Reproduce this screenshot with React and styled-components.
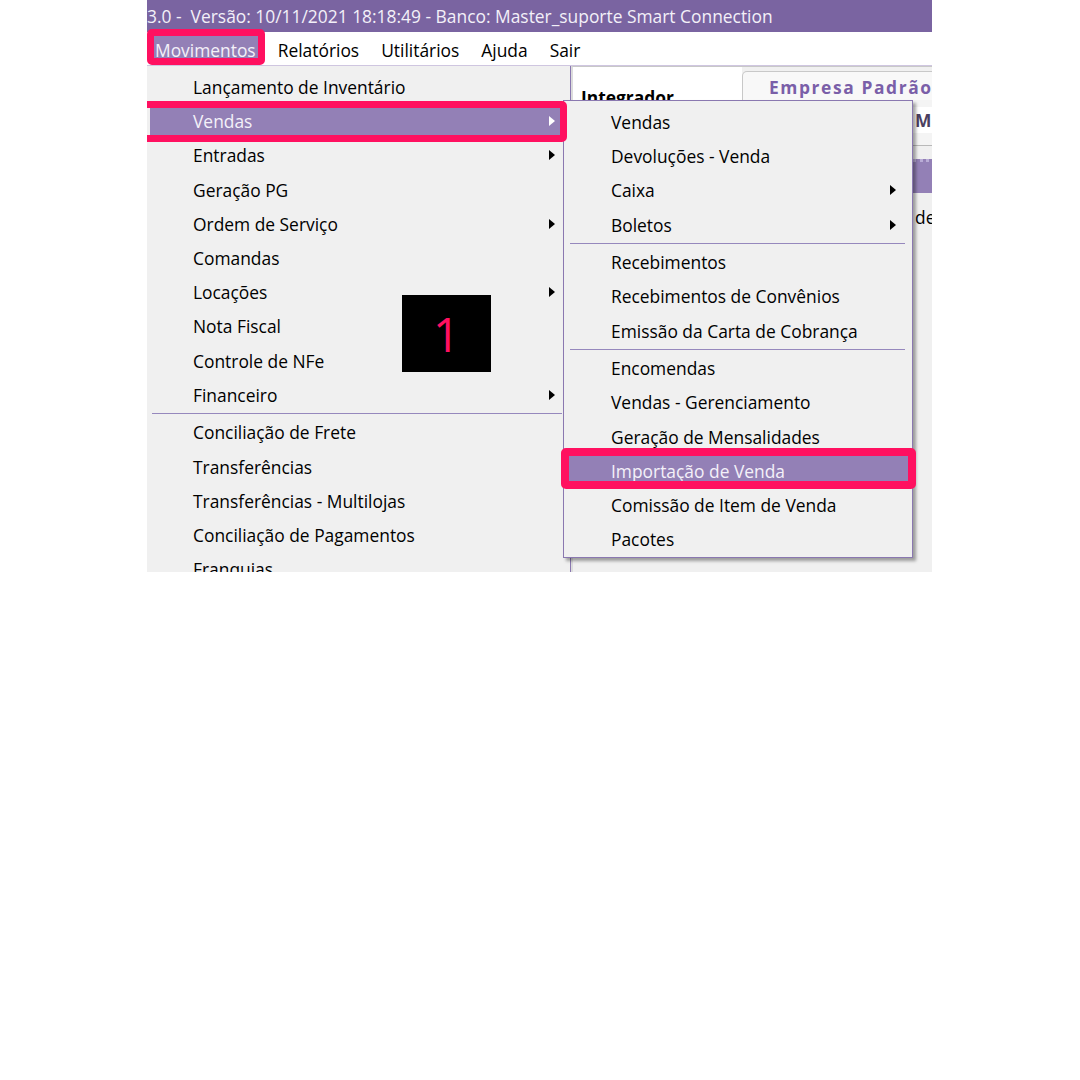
import React from 'react'
import styled, { createGlobalStyle } from 'styled-components'

const GlobalStyle = createGlobalStyle`
  html, body {
    margin: 0;
    padding: 0;
    background: #ffffff;
  }
`;

const Frame = styled.div`
  position: relative;
  margin-left: 147px;
  width: 785px;
  height: 572px;
  overflow: hidden;
  background: #f0f0f0;
  font-family: "Open Sans", "Noto Sans", sans-serif;
  font-size: 17.4px;
  color: #000;
`;

const TitleBar = styled.div`
  height: 32px;
  display: flex;
  align-items: center;
  background: #7a64a1;
  color: #f3f0f8;
  white-space: pre;
`;

const MenuBar = styled.div`
  height: 34px;
  display: flex;
  align-items: stretch;
  gap: 16px;
  padding-left: 5px;
  background: #ffffff;
  border-bottom: 1px solid #cfc6e0;
  box-sizing: border-box;
`;

const TopItem = styled.div`
  position: relative;
  display: flex;
  align-items: center;
  padding: 3px 3px 0;
  background: ${p => (p.$active ? '#9380b6' : 'transparent')};
  color: ${p => (p.$active ? '#f4f1f9' : '#000')};
`;

const Ring = styled.div`
  position: absolute;
  top: ${p => p.$t}px;
  bottom: ${p => p.$b}px;
  left: ${p => p.$l}px;
  right: ${p => p.$r}px;
  border: ${p => p.$w || 7}px solid #ff1060;
  border-radius: 5px;
  pointer-events: none;
  z-index: 5;
`;

const Workspace = styled.div`
  position: relative;
  display: flex;
  height: 506px;
`;

const DropMenu = styled.div`
  width: 423px;
  flex-shrink: 0;
  padding-top: 4px;
  background: #f0f0f0;
  border-right: 1px solid #8a78b0;
`;

const Row = styled.div`
  position: relative;
  display: flex;
  align-items: center;
  height: 34.2px;
  box-sizing: border-box;
  margin: 0 ${p => p.$mr}px 0 3px;
  padding-left: ${p => p.$pl}px;
  padding-right: ${p => p.$pr}px;
  white-space: nowrap;
  background: ${p => (p.$active ? '#9380b6' : 'transparent')};
  color: ${p => (p.$active ? '#f4f1f9' : '#000')};
`;

const Arrow = styled.span`
  margin-left: auto;
  width: 0;
  height: 0;
  border-top: 5px solid transparent;
  border-bottom: 5px solid transparent;
  border-left: 6px solid ${p => (p.$light ? '#ffffff' : '#000')};
`;

const Separator = styled.div`
  height: 3.4px;
  margin: 0 ${p => p.$mr}px 0 ${p => p.$ml}px;
  display: flex;
  align-items: center;
  &::before {
    content: '';
    flex: 1;
    height: 1.6px;
    background: #9688bd;
  }
`;

const SubMenu = styled.div`
  position: absolute;
  left: 416px;
  top: 34px;
  width: 350px;
  height: 458px;
  box-sizing: border-box;
  padding-top: 4px;
  background: #f0f0f0;
  border: 1px solid #8a78b0;
  box-shadow: 3px 3px 3px rgba(0, 0, 0, 0.35);
  z-index: 3;
`;

const Window = styled.div`
  flex: 1;
  display: flex;
  flex-direction: column;
  border-left: 2px solid #dcdcdc;
  border-top: 1px solid #c8c8c8;
`;

const TabStrip = styled.div`
  height: 33px;
  display: flex;
  align-items: flex-end;
`;

const PageLabel = styled.div`
  width: 169px;
  height: 100%;
  box-sizing: border-box;
  padding: 20px 0 0 8px;
  background: #ffffff;
  font-weight: 700;
  line-height: 20px;
`;

const Tab = styled.div`
  flex: 1;
  height: 29px;
  box-sizing: border-box;
  padding: 3px 0 0 26px;
  background: #f8f8f8;
  border: 1px solid #c8c8c8;
  border-bottom: none;
  border-radius: 5px 0 0 0;
  color: #7a5fa8;
  font-weight: 700;
  letter-spacing: 1.6px;
  white-space: nowrap;
`;

const FieldRow = styled.div`
  padding: 7px 0 0 340px;
  height: 46px;
  box-sizing: border-box;
  background: #f4f4f4;
  border-bottom: 1px solid #b9b9b9;
`;

const Field = styled.div`
  height: 26px;
  background: #ffffff;
  display: flex;
  align-items: center;
  padding-left: 2px;
  color: #4b3f60;
  font-weight: 700;
`;

const GridHead = styled.div`
  margin-top: 13px;
  margin-left: 340px;
  height: 34px;
  background: #9380b6;
  border-top: 3px dotted #b9acd6;
  box-sizing: border-box;
`;

const GridText = styled.div`
  padding: 12px 0 0 342px;
  white-space: nowrap;
`;

const Badge = styled.div`
  position: absolute;
  left: 255px;
  top: 229px;
  width: 89px;
  height: 77px;
  display: flex;
  align-items: center;
  justify-content: center;
  background: #000;
  color: #ff1060;
  font-family: "Open Sans", sans-serif;
  font-size: 47px;
  z-index: 4;
`;

const leftItems = [
  { label: 'Lançamento de Inventário' },
  { label: 'Vendas', sub: true, active: true },
  { label: 'Entradas', sub: true },
  { label: 'Geração PG' },
  { label: 'Ordem de Serviço', sub: true },
  { label: 'Comandas' },
  { label: 'Locações', sub: true },
  { label: 'Nota Fiscal' },
  { label: 'Controle de NFe' },
  { label: 'Financeiro', sub: true },
  { sep: true },
  { label: 'Conciliação de Frete' },
  { label: 'Transferências' },
  { label: 'Transferências - Multilojas' },
  { label: 'Conciliação de Pagamentos' },
  { label: 'Franquias' },
];

const subItems = [
  { label: 'Vendas' },
  { label: 'Devoluções - Venda' },
  { label: 'Caixa', sub: true },
  { label: 'Boletos', sub: true },
  { sep: true },
  { label: 'Recebimentos' },
  { label: 'Recebimentos de Convênios' },
  { label: 'Emissão da Carta de Cobrança' },
  { sep: true },
  { label: 'Encomendas' },
  { label: 'Vendas - Gerenciamento' },
  { label: 'Geração de Mensalidades' },
  { label: 'Importação de Venda', active: true },
  { label: 'Comissão de Item de Venda' },
  { label: 'Pacotes' },
];

export default function App() {
  return (
    <>
      <GlobalStyle />
      <Frame>
        <TitleBar>3.0 -  Versão: 10/11/2021 18:18:49 - Banco: Master_suporte Smart Connection</TitleBar>
        <MenuBar>
          <TopItem $active>
            Movimentos
            <Ring $t={-3} $b={0} $l={-5} $r={-6} />
          </TopItem>
          <TopItem>Relatórios</TopItem>
          <TopItem>Utilitários</TopItem>
          <TopItem>Ajuda</TopItem>
          <TopItem>Sair</TopItem>
        </MenuBar>
        <Workspace>
          <DropMenu>
            {leftItems.map((it, i) =>
              it.sep ? (
                <Separator key={i} $ml={5} $mr={8} />
              ) : (
                <Row key={i} $mr={8} $pl={43} $pr={7} $active={it.active}>
                  {it.label}
                  {it.sub && <Arrow $light={it.active} />}
                  {it.active && <Ring $t={-3} $b={-4} $l={-10} $r={-5} $w={7} />}
                </Row>
              )
            )}
          </DropMenu>
          <Window>
            <TabStrip>
              <PageLabel>Integrador</PageLabel>
              <Tab>Empresa Padrão</Tab>
            </TabStrip>
            <FieldRow>
              <Field>M.</Field>
            </FieldRow>
            <GridHead />
            <GridText>de</GridText>
          </Window>
          <SubMenu>
            {subItems.map((it, i) =>
              it.sep ? (
                <Separator key={i} $ml={6} $mr={7} />
              ) : (
                <Row key={i} $mr={3} $pl={44} $pr={13} $active={it.active}>
                  {it.label}
                  {it.sub && <Arrow />}
                  {it.active && <Ring $t={-6} $b={-1} $l={-6} $r={-7} $w={8} />}
                </Row>
              )
            )}
          </SubMenu>
          <Badge>1</Badge>
        </Workspace>
      </Frame>
    </>
  )
}
